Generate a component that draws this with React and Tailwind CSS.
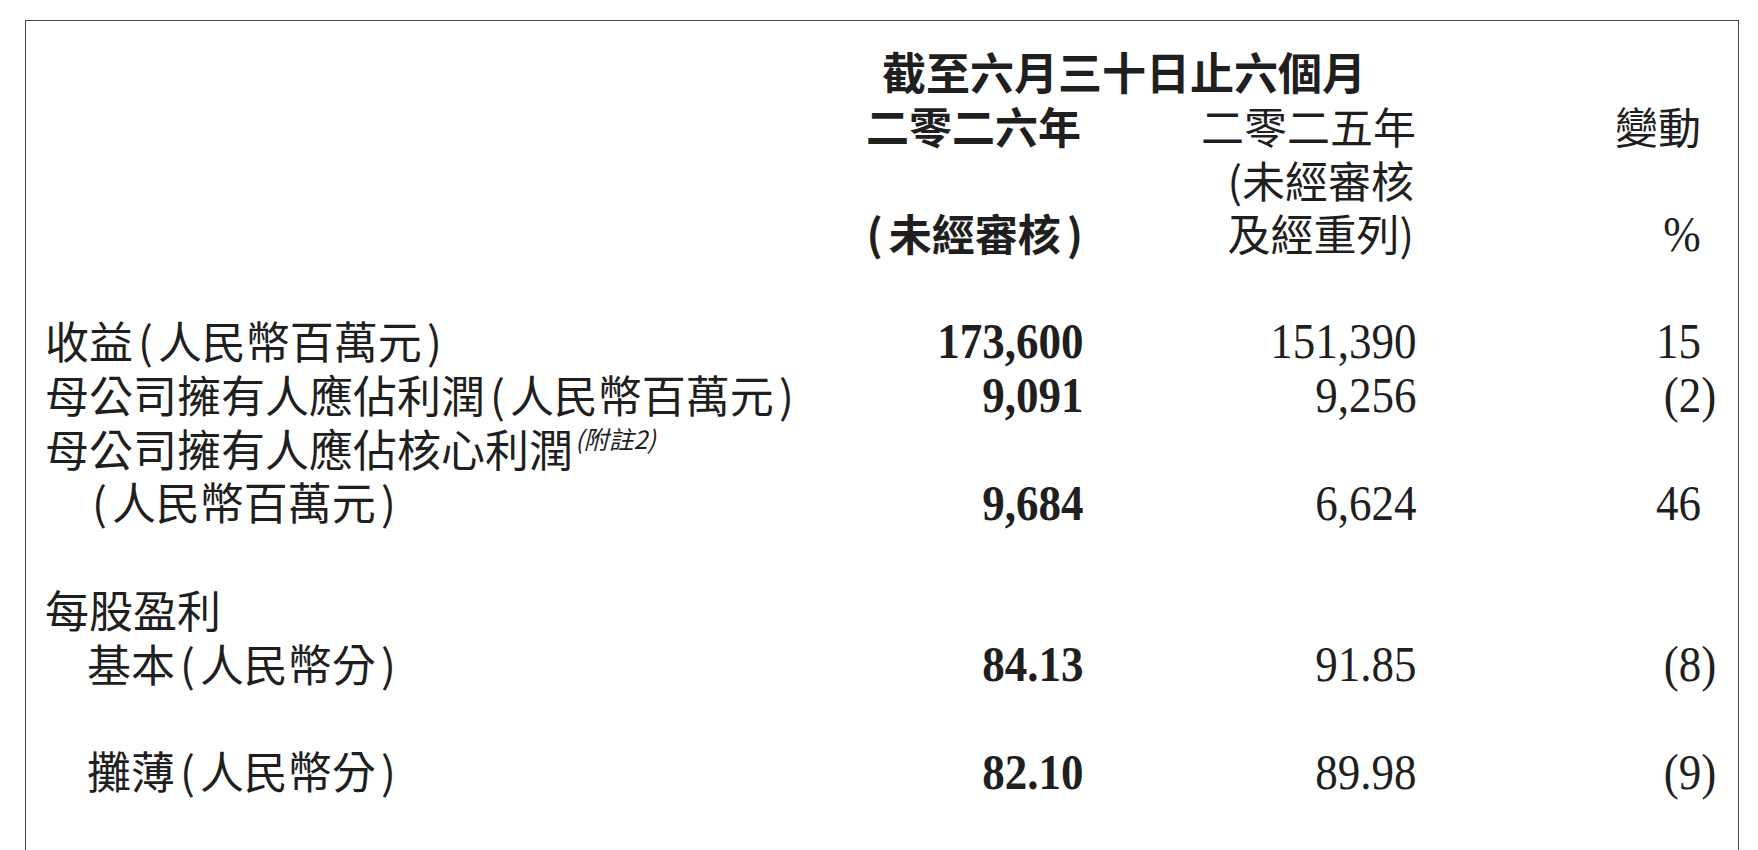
import React from "react";

const cjk = "font-['Noto_Sans_CJK_TC','Noto_Sans_CJK_SC',sans-serif]";
const num = "font-['Liberation_Serif','Times_New_Roman',serif]";

function P({ children }) {
  return <span className="mx-[5px]">{children}</span>;
}

function Num({ children, bold, hang }) {
  return (
    <div className="text-right">
      <span
        className={`${num} inline-block origin-right translate-y-[7px] scale-x-[0.9] text-[50px] ${bold ? "font-bold" : ""} ${hang ? "translate-x-[15px]" : ""}`}
      >
        {children}
      </span>
    </div>
  );
}

function Blank() {
  return <div className="col-span-4 h-[53.8px]" />;
}

function Label({ text }) {
  // split ASCII parentheses out so they get a little breathing room
  const parts = text.split(/([()])/).filter(Boolean);
  return parts.map((p, i) => (p === "(" || p === ")" ? <P key={i}>{p}</P> : <span key={i}>{p}</span>));
}

function Row({ label, indent, note, a, b, c, hang }) {
  return (
    <>
      <div className={`${cjk} whitespace-nowrap text-[44px] ${indent ? "pl-[42px]" : ""}`}>
        <Label text={label} />
        {note && (
          <span className="relative top-[4px] ml-[2px] inline-block align-top text-[25px] italic leading-none">
            (附註2)
          </span>
        )}
      </div>
      {a !== undefined ? <Num bold>{a}</Num> : <div />}
      {b !== undefined ? <Num>{b}</Num> : <div />}
      {c !== undefined ? <Num hang={hang}>{c}</Num> : <div />}
    </>
  );
}

export default function App() {
  return (
    <div className="min-h-[850px] bg-white pl-[25px] pt-[20px] text-[#1f1f1f]">
      <div className="h-[830px] w-[1714px] border-l border-r border-t border-[#444] pl-[19px] pr-[37px] pt-[24px]">
        <div className="grid grid-cols-[1fr_260px_333px_285px] auto-rows-[53.8px] items-center leading-[53.8px]">
          {/* header */}
          <div />
          <div className={`${cjk} col-span-2 whitespace-nowrap pr-[50px] text-right text-[44px] font-bold`}>截至六月三十日止六個月</div>
          <div />

          <div />
          <div className={`${cjk} pr-[2px] text-right text-[43px] font-bold`}>二零二六年</div>
          <div className={`${cjk} text-right text-[43px]`}>二零二五年</div>
          <div className={`${cjk} text-right text-[43px]`}>變動</div>

          <div />
          <div />
          <div className={`${cjk} pr-[2px] text-right text-[43px]`}>(未經審核</div>
          <div />

          <div />
          <div className={`${cjk} whitespace-nowrap text-right text-[43px] font-bold`}>
            <span className="pr-[6px]">(</span>未經審核<span className="pl-[6px]">)</span>
          </div>
          <div className={`${cjk} pr-[2px] text-right text-[43px]`}>及經重列)</div>
          <Num>%</Num>

          <Blank />

          <Row label="收益(人民幣百萬元)" a="173,600" b="151,390" c="15" />
          <Row label="母公司擁有人應佔利潤(人民幣百萬元)" a="9,091" b="9,256" c="(2)" hang />
          <Row label="母公司擁有人應佔核心利潤" note />
          <Row label="(人民幣百萬元)" indent a="9,684" b="6,624" c="46" />

          <Blank />

          <Row label="每股盈利" />
          <Row label="基本(人民幣分)" indent a="84.13" b="91.85" c="(8)" hang />

          <Blank />

          <Row label="攤薄(人民幣分)" indent a="82.10" b="89.98" c="(9)" hang />
        </div>
      </div>
    </div>
  );
}
